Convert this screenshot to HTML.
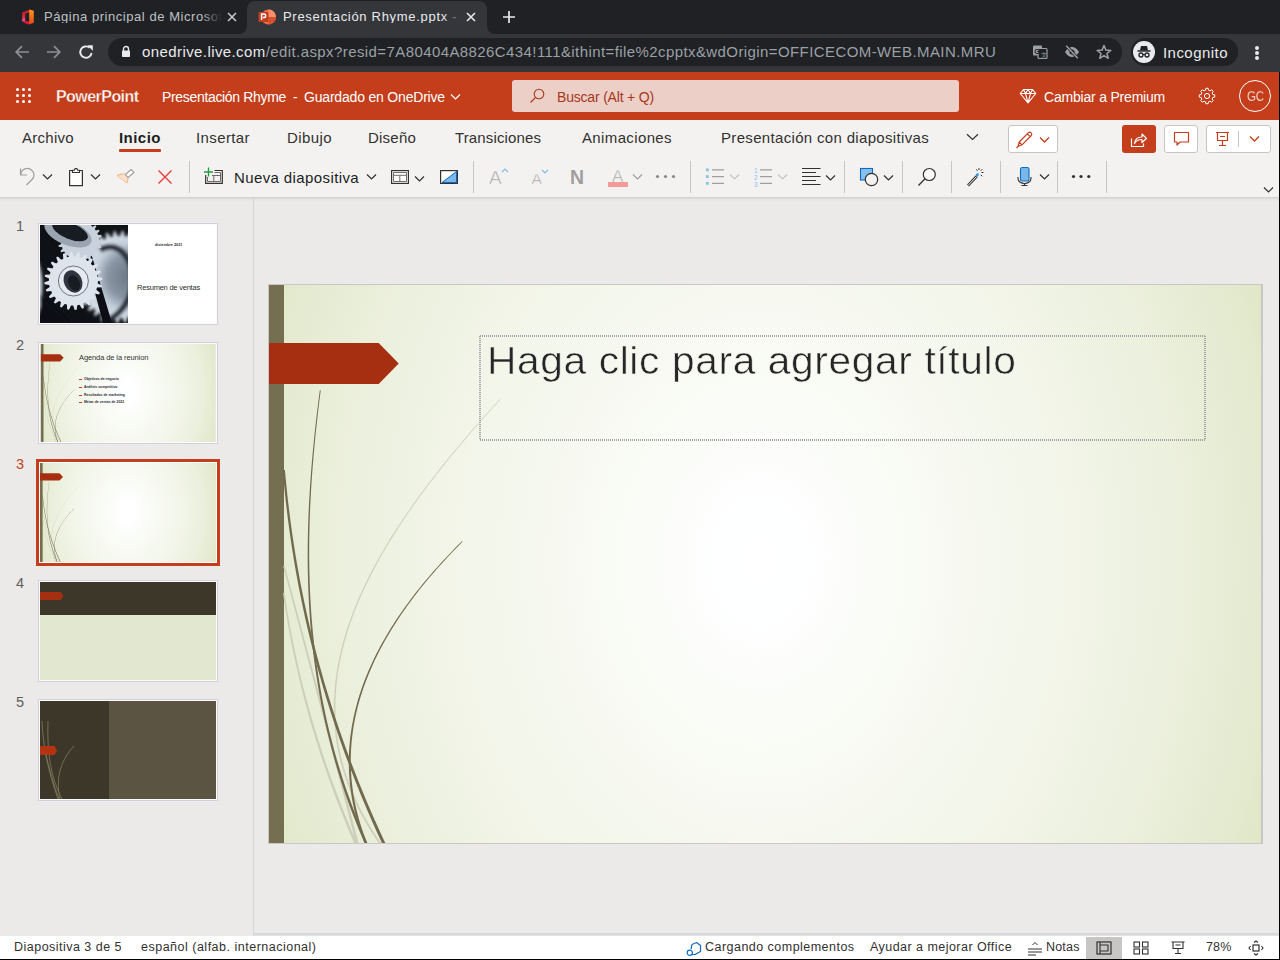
<!DOCTYPE html>
<html><head><meta charset="utf-8">
<style>
*{margin:0;padding:0;box-sizing:border-box}
html,body{width:1280px;height:960px;overflow:hidden;background:#000;font-family:"Liberation Sans",sans-serif}
.a{position:absolute}
.t{position:absolute;white-space:nowrap;line-height:1}
#tabs{left:0;top:0;width:1280px;height:34px;background:#202124}
#toolbar{left:0;top:34px;width:1280px;height:38px;background:#35363a}
#hdr{left:0;top:72px;width:1279px;height:48px;background:#c43e1c}
#rib{left:0;top:120px;width:1279px;height:77px;background:#f3f2f1}
#pane{left:0;top:197px;width:253px;height:739px;background:#ebeae8}
#canvas{left:254px;top:197px;width:1025px;height:736px;background:#ebeae8}
#status{left:0;top:936px;width:1279px;height:23px;background:#fff}
</style></head><body>
<!-- CHROME -->
<div class="a" id="tabs"></div>
<!-- inactive tab favicon (office) -->
<svg class="a" style="left:21px;top:9px" width="14" height="16" viewBox="0 0 14 16">
<defs><linearGradient id="ogR" x1="0" y1="0" x2="0" y2="1"><stop offset="0" stop-color="#ff9b16"/><stop offset="1" stop-color="#e2451a"/></linearGradient><linearGradient id="ogL" x1="0" y1="0" x2="0" y2="1"><stop offset="0" stop-color="#c41b25"/><stop offset="0.6" stop-color="#d9283f"/><stop offset="1" stop-color="#ee5fc0"/></linearGradient></defs>
<path d="M1.2 3.6 L8.6 0.4 V3.4 L4.2 4.6 V12 L1.2 12.6Z" fill="url(#ogL)"/>
<path d="M1.2 12.6 L4.2 12 L8.6 12.4 V15.6 L4.6 14.6Z" fill="#e7173b"/>
<path d="M8.2 0.4 L12.8 1.8 V13.8 L8.2 15.6Z" fill="url(#ogR)"/>
</svg>
<div class="t" id="tab1t" style="left:44px;top:10px;font-size:13px;letter-spacing:0.55px;color:#bdc1c6;width:180px;overflow:hidden">Página principal de Microsoft</div>
<div class="a" style="left:202px;top:0;width:22px;height:34px;background:linear-gradient(90deg,rgba(32,33,36,0),#202124 90%)"></div>
<svg class="a" style="left:227px;top:12px" width="10" height="10" viewBox="0 0 10 10"><path d="M1 1L9 9M9 1L1 9" stroke="#c4c7c9" stroke-width="1.6"/></svg>
<!-- active tab -->
<div class="a" style="left:247px;top:1px;width:240px;height:34px;background:#35363a;border-radius:8px 8px 0 0"></div>
<div class="a" style="left:239px;top:26px;width:8px;height:8px;background:#35363a"></div>
<div class="a" style="left:239px;top:18px;width:8px;height:16px;background:#202124;border-radius:0 0 8px 0"></div>
<div class="a" style="left:487px;top:26px;width:8px;height:8px;background:#35363a"></div>
<div class="a" style="left:487px;top:18px;width:8px;height:16px;background:#202124;border-radius:0 0 0 8px"></div>
<svg class="a" style="left:258px;top:9px" width="18" height="16" viewBox="0 0 18 16">
<circle cx="10.5" cy="8" r="7.5" fill="#ed6c47"/>
<path d="M10.5 0.5 A7.5 7.5 0 0 1 18 8 L10.5 8Z" fill="#ff8f6b"/>
<path d="M10.5 8 L18 8 A7.5 7.5 0 0 1 10.5 15.5Z" fill="#d35230"/>
<rect x="0.5" y="3" width="10" height="10" rx="1" fill="#c43e1c"/>
<path d="M3.6 11V5h2.3a1.8 1.8 0 0 1 0 3.6H4.9" stroke="#fff" stroke-width="1.5" fill="none"/>
</svg>
<div class="t" id="tab2t" style="left:283px;top:10px;font-size:13px;letter-spacing:0.7px;color:#e8eaed;width:178px;overflow:hidden">Presentación Rhyme.pptx - PowerPoint</div>
<div class="a" style="left:443px;top:2px;width:19px;height:30px;background:linear-gradient(90deg,rgba(53,54,58,0),#35363a 95%)"></div>
<svg class="a" style="left:466px;top:12px" width="10" height="10" viewBox="0 0 10 10"><path d="M1 1L9 9M9 1L1 9" stroke="#e8eaed" stroke-width="1.6"/></svg>
<svg class="a" style="left:502px;top:10px" width="14" height="14" viewBox="0 0 14 14"><path d="M7 1V13M1 7H13" stroke="#e8eaed" stroke-width="1.7"/></svg>

<div class="a" id="toolbar"></div>
<svg class="a" style="left:14px;top:44px" width="16" height="16" viewBox="0 0 16 16"><path d="M15 8H2.5M8 2.2L2.2 8L8 13.8" stroke="#8d9095" stroke-width="1.7" fill="none"/></svg>
<svg class="a" style="left:46px;top:44px" width="16" height="16" viewBox="0 0 16 16"><path d="M1 8H13.5M8 2.2L13.8 8L8 13.8" stroke="#8d9095" stroke-width="1.7" fill="none"/></svg>
<svg class="a" style="left:78px;top:44px" width="16" height="16" viewBox="0 0 16 16"><path d="M13.6 9A5.7 5.7 0 1 1 11.6 3.7" stroke="#e8eaed" stroke-width="1.9" fill="none"/><path d="M9.3 1.2H14.8V6.7Z" fill="#e8eaed"/></svg>
<div class="a" style="left:108px;top:38px;width:1014px;height:28px;background:#202124;border-radius:14px"></div>
<svg class="a" style="left:121px;top:45px" width="10" height="13" viewBox="0 0 10 13"><path d="M2.5 6V4a2.5 2.5 0 0 1 5 0V6" stroke="#e8eaed" stroke-width="1.4" fill="none"/><rect x="1" y="5.5" width="8" height="6.5" rx="0.8" fill="#e8eaed"/></svg>
<div class="t" id="url" style="left:142px;top:44px;font-size:15px;letter-spacing:0.41px;color:#9aa0a6"><span style="color:#e8eaed">onedrive.live.com</span>/edit.aspx?resid=7A80404A8826C434!111&amp;ithint=file%2cpptx&amp;wdOrigin=OFFICECOM-WEB.MAIN.MRU</div>
<svg class="a" style="left:1032px;top:44px" width="16" height="16" viewBox="0 0 16 16"><rect x="1" y="1.5" width="9" height="10" rx="1" fill="#9aa0a6"/><rect x="6" y="4.5" width="9" height="10" rx="1" fill="#202124" stroke="#9aa0a6" stroke-width="1.2"/><text x="2.2" y="9.5" font-size="7" font-weight="bold" fill="#202124" font-family="Liberation Sans">G</text><text x="8.5" y="12.5" font-size="6" fill="#9aa0a6" font-family="Liberation Sans">文</text></svg>
<svg class="a" style="left:1064px;top:44px" width="16" height="16" viewBox="0 0 16 16"><path d="M1 8C3 4.5 5.5 3 8 3S13 4.5 15 8C13 11.5 10.5 13 8 13S3 11.5 1 8Z" fill="#9aa0a6"/><circle cx="8" cy="8" r="2.5" fill="#202124"/><path d="M2 1.5L14 14.5" stroke="#202124" stroke-width="3"/><path d="M2.2 1.8L13.8 14.2" stroke="#9aa0a6" stroke-width="1.5"/></svg>
<svg class="a" style="left:1096px;top:44px" width="16" height="16" viewBox="0 0 16 16"><path d="M8 1.5L9.9 6.1L14.8 6.4L11 9.5L12.2 14.3L8 11.6L3.8 14.3L5 9.5L1.2 6.4L6.1 6.1Z" stroke="#9aa0a6" stroke-width="1.5" fill="none" stroke-linejoin="round"/></svg>
<div class="a" style="left:1131px;top:38px;width:107px;height:28px;background:#202124;border-radius:14px"></div>
<div class="a" style="left:1133px;top:41px;width:22px;height:22px;background:#e8eaed;border-radius:50%"></div>
<svg class="a" style="left:1135px;top:43px" width="18" height="18" viewBox="0 0 18 18"><path d="M5 7.2L6 3H12L13 7.2Z" fill="#202124"/><rect x="2.5" y="7.2" width="13" height="1.5" fill="#202124"/><circle cx="6" cy="12" r="2" stroke="#202124" stroke-width="1.3" fill="none"/><circle cx="12" cy="12" r="2" stroke="#202124" stroke-width="1.3" fill="none"/><path d="M8 11.5H10" stroke="#202124" stroke-width="1.2"/></svg>
<div class="t" id="incog" style="left:1163px;top:45px;font-size:15px;letter-spacing:0.45px;color:#e8eaed">Incognito</div>
<div class="a" style="left:1255px;top:46px;width:4px;height:4px;background:#e8eaed;border-radius:50%"></div>
<div class="a" style="left:1255px;top:51px;width:4px;height:4px;background:#e8eaed;border-radius:50%"></div>
<div class="a" style="left:1255px;top:56px;width:4px;height:4px;background:#e8eaed;border-radius:50%"></div>
<!-- OFFICE HEADER -->
<div class="a" id="hdr"></div>
<svg class="a" style="left:15px;top:87px" width="18" height="18" viewBox="0 0 18 18" fill="#fff"><circle cx="2.5" cy="2.5" r="1.5"/><circle cx="8.5" cy="2.5" r="1.5"/><circle cx="14.5" cy="2.5" r="1.5"/><circle cx="2.5" cy="8.5" r="1.5"/><circle cx="8.5" cy="8.5" r="1.5"/><circle cx="14.5" cy="8.5" r="1.5"/><circle cx="2.5" cy="14.5" r="1.5"/><circle cx="8.5" cy="14.5" r="1.5"/><circle cx="14.5" cy="14.5" r="1.5"/></svg>
<div class="t" style="left:56px;top:89.3px;font-size:16px;font-weight:bold;color:#fff;letter-spacing:-0.55px;-webkit-text-stroke:0.35px #c43e1c">PowerPoint</div>
<div class="t" style="left:162px;top:89.8px;font-size:14px;color:#fff;letter-spacing:-0.33px">Presentación Rhyme</div>
<div class="t" style="left:293px;top:89.8px;font-size:14px;color:#fff">-</div>
<div class="t" style="left:304px;top:89.8px;font-size:14px;color:#fff;letter-spacing:-0.19px">Guardado en OneDrive</div>
<svg class="a" style="left:450px;top:93px" width="11" height="8" viewBox="0 0 11 8"><path d="M1 1.5L5.5 6L10 1.5" stroke="#fff" stroke-width="1.2" fill="none"/></svg>
<div class="a" style="left:512px;top:80px;width:447px;height:32px;background:#eccfc7;border-radius:3px"></div>
<svg class="a" style="left:529px;top:88px" width="16" height="16" viewBox="0 0 16 16"><circle cx="10" cy="6" r="4.8" stroke="#a7381b" stroke-width="1.1" fill="none"/><path d="M6.6 9.4L1.5 14.5" stroke="#a7381b" stroke-width="1.2"/></svg>
<div class="t" style="left:557px;top:90.3px;font-size:14px;color:#a7381b;letter-spacing:-0.19px">Buscar (Alt + Q)</div>
<svg class="a" style="left:1019px;top:88px" width="18" height="16" viewBox="0 0 18 16"><path d="M4.5 1.5H13.5L16.8 5.5L9 14.8L1.2 5.5Z M1.2 5.5H16.8 M6.5 5.5L9 14.8L11.5 5.5 M4.5 1.5L6.5 5.5L9 1.5L11.5 5.5L13.5 1.5" stroke="#fff" stroke-width="1.1" fill="none" stroke-linejoin="round"/></svg>
<div class="t" style="left:1044px;top:89.5px;font-size:14px;color:#fff;letter-spacing:-0.2px">Cambiar a Premium</div>
<svg class="a" style="left:1198px;top:87px" width="18" height="18" viewBox="0 0 18 18"><path d="M7.90 1.28 L10.10 1.28 L10.49 3.19 L12.05 3.84 L13.68 2.76 L15.24 4.32 L14.16 5.95 L14.81 7.51 L16.72 7.90 L16.72 10.10 L14.81 10.49 L14.16 12.05 L15.24 13.68 L13.68 15.24 L12.05 14.16 L10.49 14.81 L10.10 16.72 L7.90 16.72 L7.51 14.81 L5.95 14.16 L4.32 15.24 L2.76 13.68 L3.84 12.05 L3.19 10.49 L1.28 10.10 L1.28 7.90 L3.19 7.51 L3.84 5.95 L2.76 4.32 L4.32 2.76 L5.95 3.84 L7.51 3.19Z" stroke="#fff" stroke-width="1" fill="none" stroke-linejoin="round"/><circle cx="9" cy="9" r="2.6" stroke="#fff" stroke-width="1" fill="none"/></svg>
<div class="a" style="left:1239px;top:80px;width:32px;height:32px;border:1px solid #fff;border-radius:50%"></div>
<div class="t" style="left:1246.5px;top:89px;font-size:14.5px;color:#fff;letter-spacing:-0.2px;transform:scaleX(0.8);transform-origin:0 0;-webkit-text-stroke:0.3px #c43e1c">GC</div>

<!-- RIBBON -->
<div class="a" id="rib"></div>
<div class="t" style="left:22px;top:130px;font-size:15px;color:#323130;letter-spacing:0.28px">Archivo</div>
<div class="t" style="left:119px;top:130px;font-size:15px;font-weight:bold;color:#201f1e;letter-spacing:0.45px">Inicio</div>
<div class="a" style="left:119px;top:149px;width:42px;height:3px;background:#c43e1c;border-radius:1px"></div>
<div class="t" style="left:196px;top:130px;font-size:15px;color:#323130;letter-spacing:0.39px">Insertar</div>
<div class="t" style="left:287px;top:130px;font-size:15px;color:#323130;letter-spacing:0.41px">Dibujo</div>
<div class="t" style="left:368px;top:130px;font-size:15px;color:#323130;letter-spacing:0.22px">Diseño</div>
<div class="t" style="left:455px;top:130px;font-size:15px;color:#323130;letter-spacing:0.13px">Transiciones</div>
<div class="t" style="left:582px;top:130px;font-size:15px;color:#323130;letter-spacing:0.37px">Animaciones</div>
<div class="t" style="left:721px;top:130px;font-size:15px;color:#323130;letter-spacing:0.33px">Presentación con diapositivas</div>
<svg class="a" style="left:966px;top:133px" width="13" height="8" viewBox="0 0 13 8"><path d="M1 1.2L6.5 6.5L12 1.2" stroke="#323130" stroke-width="1.2" fill="none"/></svg>
<!-- right buttons -->
<div class="a" style="left:1008px;top:125px;width:50px;height:28px;background:#fff;border:1px solid #c8c6c4;border-radius:3px"></div>
<svg class="a" style="left:1015px;top:130px" width="20" height="19" viewBox="0 0 20 19"><path d="M3 16.5L4.2 12L13.5 2.7a2 2 0 0 1 2.8 2.8L7 14.8Z M12.3 3.9L15.1 6.7 M4.2 12L7 14.8 M1.5 18L3 16.5" stroke="#c43e1c" stroke-width="1.2" fill="none" stroke-linejoin="round"/></svg>
<svg class="a" style="left:1039px;top:136px" width="11" height="8" viewBox="0 0 11 8"><path d="M1 1.5L5.5 6L10 1.5" stroke="#c43e1c" stroke-width="1.3" fill="none"/></svg>
<div class="a" style="left:1122px;top:125px;width:34px;height:28px;background:#c43e1c;border-radius:3px"></div>
<svg class="a" style="left:1130px;top:131px" width="18" height="17" viewBox="0 0 18 17"><path d="M1.5 7.5V15.5H13.5V12.5" stroke="#fff" stroke-width="1.2" fill="none"/><path d="M4.5 12.5C5 8 8 6 12 6V3L16.5 7.5L12 11.5V8.5C8.5 8.5 6 9.5 4.5 12.5Z" stroke="#fff" stroke-width="1.2" fill="none" stroke-linejoin="round"/></svg>
<div class="a" style="left:1164px;top:125px;width:34px;height:28px;background:#fff;border:1px solid #c8c6c4;border-radius:3px"></div>
<svg class="a" style="left:1173px;top:131px" width="17" height="16" viewBox="0 0 17 16"><path d="M1.5 1.5H15.5V11H7L4 14V11H1.5Z" stroke="#c43e1c" stroke-width="1.2" fill="none" stroke-linejoin="round"/></svg>
<div class="a" style="left:1206px;top:125px;width:65px;height:28px;background:#fff;border:1px solid #c8c6c4;border-radius:3px"></div>
<svg class="a" style="left:1215px;top:131px" width="15" height="16" viewBox="0 0 15 16"><path d="M1 1.5H14 M2.5 1.5V9.5H12.5V1.5 M7.5 9.5V14.5 M4 14.5H11 M5 5.5H10" stroke="#c43e1c" stroke-width="1.2" fill="none"/></svg>
<div class="a" style="left:1238px;top:131px;width:1px;height:16px;background:#c8c6c4"></div>
<svg class="a" style="left:1249px;top:135px" width="11" height="8" viewBox="0 0 11 8"><path d="M1 1.5L5.5 6L10 1.5" stroke="#c43e1c" stroke-width="1.3" fill="none"/></svg>

<!-- toolbar row -->
<svg class="a" style="left:18px;top:167px" width="20" height="20" viewBox="0 0 20 20"><path d="M2.5 1.5V8H9" stroke="#a19f9d" stroke-width="1.2" fill="none"/><path d="M2.8 7.8A6.5 6.5 0 0 1 14 3.5C16.8 6 16.5 10 14 12.5L8.5 18" stroke="#a19f9d" stroke-width="1.2" fill="none"/></svg>
<svg class="a" style="left:42px;top:173px" width="11" height="8" viewBox="0 0 11 8"><path d="M1 1.5L5.5 6L10 1.5" stroke="#323130" stroke-width="1.2" fill="none"/></svg>
<svg class="a" style="left:68px;top:167px" width="16" height="20" viewBox="0 0 16 20"><path d="M1.6 3.5H4.5V5.5H11.5V3.5H14.4V18.6H1.6Z" stroke="#323130" stroke-width="1.2" fill="#fff" stroke-linejoin="round"/><path d="M4.5 5.5V3.2H6.3L7 1.6H9L9.7 3.2H11.5V5.5Z" stroke="#323130" stroke-width="1.1" fill="#fff" stroke-linejoin="round"/></svg>
<svg class="a" style="left:90px;top:173px" width="11" height="8" viewBox="0 0 11 8"><path d="M1 1.5L5.5 6L10 1.5" stroke="#323130" stroke-width="1.2" fill="none"/></svg>
<svg class="a" style="left:116px;top:168px" width="20" height="18" viewBox="0 0 20 18"><path d="M1 7.5L7.5 10.5L11 15Z" fill="#fbe1cb" stroke="#eeae7c" stroke-width="1"/><path d="M1 7.5C4 6 7 5.5 9.5 6.5L12 9.5C12 12 11.5 13.5 11 15" stroke="#eeae7c" stroke-width="1" fill="#fbe1cb"/><path d="M9.5 6.5L15 1.5L18 4.5L12 9.5Z" stroke="#a19f9d" stroke-width="1.1" fill="#fff" stroke-linejoin="round"/></svg>
<svg class="a" style="left:157px;top:169px" width="16" height="16" viewBox="0 0 16 16"><path d="M1.5 1.5L14.5 14.5M14.5 1.5L1.5 14.5" stroke="#e8393b" stroke-width="1.4"/></svg>
<div class="a" style="left:189px;top:161px;width:1px;height:32px;background:#c8c6c4"></div>
<svg class="a" style="left:204px;top:166px" width="20" height="19" viewBox="0 0 20 19"><path d="M10.5 4.5H18.3V17.3H1.7V9" stroke="#323130" stroke-width="1.2" fill="none"/><path d="M10.5 6.5H16.5V15.5H3.5V11 M8 9.5H16.5 M9.8 9.5V15.5" stroke="#6b6a69" stroke-width="1" fill="none"/><path d="M4.5 1.5V10.5M0 6H9" stroke="#1e9e3e" stroke-width="1.3"/></svg>
<div class="t" style="left:234px;top:170px;font-size:15px;color:#201f1e;letter-spacing:0.39px">Nueva diapositiva</div>
<svg class="a" style="left:366px;top:173px" width="11" height="8" viewBox="0 0 11 8"><path d="M1 1.5L5.5 6L10 1.5" stroke="#323130" stroke-width="1.2" fill="none"/></svg>
<svg class="a" style="left:390px;top:169px" width="20" height="16" viewBox="0 0 20 16"><rect x="1.6" y="1.6" width="16.8" height="12.8" stroke="#323130" stroke-width="1.2" fill="#fff"/><path d="M3.5 3.5H16.5V12.5H3.5Z M3.5 6.3H16.5 M9.8 6.3V12.5" stroke="#6e6d6c" stroke-width="1" fill="none"/></svg>
<svg class="a" style="left:414px;top:175px" width="11" height="8" viewBox="0 0 11 8"><path d="M1 1.5L5.5 6L10 1.5" stroke="#323130" stroke-width="1.2" fill="none"/></svg>
<svg class="a" style="left:439px;top:169px" width="20" height="16" viewBox="0 0 20 16"><rect x="1.6" y="1.6" width="16.8" height="12.8" stroke="#323130" stroke-width="1.2" fill="#fff"/><path d="M3 13.5L17.5 2.5V13.5Z" fill="#7ab8ec" stroke="#1064c0" stroke-width="1"/></svg>
<div class="a" style="left:473px;top:161px;width:1px;height:32px;background:#c8c6c4"></div>
<div class="t" style="left:489px;top:167.5px;font-size:19px;color:#a19f9d;-webkit-text-stroke:0.6px #f3f2f1">A</div>
<svg class="a" style="left:501px;top:168px" width="8" height="5" viewBox="0 0 8 5"><path d="M1 4L4 1L7 4" stroke="#7fbae8" stroke-width="1.1" fill="none"/></svg>
<div class="t" style="left:531.5px;top:170.5px;font-size:15.5px;color:#a19f9d;-webkit-text-stroke:0.5px #f3f2f1">A</div>
<svg class="a" style="left:541px;top:169px" width="8" height="5" viewBox="0 0 8 5"><path d="M1 1L4 4L7 1" stroke="#7fbae8" stroke-width="1.1" fill="none"/></svg>
<div class="t" style="left:570px;top:168px;font-size:19.5px;font-weight:bold;color:#a19f9d">N</div>
<div class="t" style="left:612px;top:167.5px;font-size:17px;color:#a19f9d;-webkit-text-stroke:0.55px #f3f2f1">A</div>
<div class="a" style="left:608px;top:182px;width:20px;height:5px;background:#f59a9a"></div>
<svg class="a" style="left:632px;top:173px" width="11" height="8" viewBox="0 0 11 8"><path d="M1 1.5L5.5 6L10 1.5" stroke="#a19f9d" stroke-width="1.2" fill="none"/></svg>
<svg class="a" style="left:655px;top:174px" width="21" height="5" viewBox="0 0 21 5" fill="#8a8886"><circle cx="2.5" cy="2.5" r="1.6"/><circle cx="10.5" cy="2.5" r="1.6"/><circle cx="18.5" cy="2.5" r="1.6"/></svg>
<div class="a" style="left:690px;top:161px;width:1px;height:32px;background:#c8c6c4"></div>
<svg class="a" style="left:705px;top:167px" width="21" height="19" viewBox="0 0 21 19"><rect x="1" y="1.5" width="2.8" height="2.8" fill="#8cc2ea"/><rect x="1" y="8.2" width="2.8" height="2.8" fill="#8cc2ea"/><rect x="1" y="15" width="2.8" height="2.8" fill="#8cc2ea"/><path d="M7 2.9H19M7 9.6H19M7 16.4H19" stroke="#a19f9d" stroke-width="1.1"/></svg>
<svg class="a" style="left:729px;top:173px" width="11" height="8" viewBox="0 0 11 8"><path d="M1 1.5L5.5 6L10 1.5" stroke="#c8c6c4" stroke-width="1.2" fill="none"/></svg>
<svg class="a" style="left:753px;top:166px" width="21" height="21" viewBox="0 0 21 21"><text x="1" y="7" font-size="6.5" fill="#8cc2ea" font-family="Liberation Sans">1</text><text x="1" y="14" font-size="6.5" fill="#8cc2ea" font-family="Liberation Sans">2</text><text x="1" y="20.5" font-size="6.5" fill="#8cc2ea" font-family="Liberation Sans">3</text><path d="M7 3.9H19M7 10.6H19M7 17.4H19" stroke="#a19f9d" stroke-width="1.1"/></svg>
<svg class="a" style="left:777px;top:173px" width="11" height="8" viewBox="0 0 11 8"><path d="M1 1.5L5.5 6L10 1.5" stroke="#c8c6c4" stroke-width="1.2" fill="none"/></svg>
<svg class="a" style="left:801px;top:166px" width="21" height="21" viewBox="0 0 21 21"><path d="M1 2.5H19.5M1 6.5H15M1 10.5H19.5M1 14.5H15M1 18.5H19.5" stroke="#323130" stroke-width="1.1"/></svg>
<svg class="a" style="left:825px;top:174px" width="11" height="8" viewBox="0 0 11 8"><path d="M1 1.5L5.5 6L10 1.5" stroke="#323130" stroke-width="1.2" fill="none"/></svg>
<div class="a" style="left:844px;top:161px;width:1px;height:32px;background:#c8c6c4"></div>
<svg class="a" style="left:859px;top:167px" width="21" height="20" viewBox="0 0 21 20"><rect x="1.5" y="1.5" width="12" height="11.5" fill="#86c0ef" stroke="#0f6cbd" stroke-width="1.1"/><circle cx="12.5" cy="12.5" r="6.2" fill="#f3f2f1" stroke="#323130" stroke-width="1.2"/></svg>
<svg class="a" style="left:883px;top:174px" width="11" height="8" viewBox="0 0 11 8"><path d="M1 1.5L5.5 6L10 1.5" stroke="#323130" stroke-width="1.2" fill="none"/></svg>
<div class="a" style="left:902px;top:161px;width:1px;height:32px;background:#c8c6c4"></div>
<svg class="a" style="left:917px;top:167px" width="20" height="20" viewBox="0 0 20 20"><circle cx="12.3" cy="7.5" r="6" stroke="#323130" stroke-width="1.2" fill="#fafafa"/><path d="M8 11.8L1.5 18.5" stroke="#323130" stroke-width="1.3"/></svg>
<div class="a" style="left:951px;top:161px;width:1px;height:32px;background:#c8c6c4"></div>
<svg class="a" style="left:966px;top:167px" width="20" height="20" viewBox="0 0 20 20"><path d="M2 18.5L10.5 9.5" stroke="#323130" stroke-width="2.6"/><path d="M2 18.5L10.5 9.5" stroke="#f3f2f1" stroke-width="1"/><path d="M9.5 8.5C10 6.5 11.5 6 12.5 6.5C13.2 7.5 12.5 9.5 10.8 10.2Z" fill="#3b8ee0"/><path d="M13 1V3M17.5 5.5H15.5M16.3 2.2L14.8 3.7M16.3 9.3L14.8 7.8M10.5 2.3L11.3 3.8" stroke="#323130" stroke-width="1"/></svg>
<div class="a" style="left:1000px;top:161px;width:1px;height:32px;background:#c8c6c4"></div>
<svg class="a" style="left:1016px;top:166px" width="17" height="21" viewBox="0 0 17 21"><rect x="4.5" y="1.5" width="8.5" height="13.5" rx="1.8" fill="#7ab8ec" stroke="#0f6cbd" stroke-width="1.1"/><path d="M2 11V12.5A6.5 5 0 0 0 15 12.5V11 M8.5 17.5V19.5 M5.5 19.5H11.5" stroke="#323130" stroke-width="1.1" fill="none"/></svg>
<svg class="a" style="left:1039px;top:173px" width="11" height="8" viewBox="0 0 11 8"><path d="M1 1.5L5.5 6L10 1.5" stroke="#323130" stroke-width="1.2" fill="none"/></svg>
<div class="a" style="left:1057px;top:161px;width:1px;height:32px;background:#c8c6c4"></div>
<svg class="a" style="left:1071px;top:174px" width="21" height="5" viewBox="0 0 21 5" fill="#323130"><circle cx="2.5" cy="2.5" r="1.6"/><circle cx="10" cy="2.5" r="1.6"/><circle cx="17.8" cy="2.5" r="1.6"/></svg>
<div class="a" style="left:1106px;top:161px;width:1px;height:32px;background:#c8c6c4"></div>
<svg class="a" style="left:1263px;top:186px" width="11" height="8" viewBox="0 0 11 8"><path d="M1 1.5L5.5 6L10 1.5" stroke="#323130" stroke-width="1.2" fill="none"/></svg>
<!-- PANE -->
<div class="a" id="pane"></div>
<div class="a" style="left:253px;top:197px;width:1px;height:739px;background:#d3d6db"></div>
<div class="t" style="left:16px;top:219px;font-size:14.5px;color:#605e5c">1</div>
<div class="t" style="left:16px;top:338px;font-size:14.5px;color:#605e5c">2</div>
<div class="t" style="left:16px;top:457px;font-size:14.5px;color:#c43e1c">3</div>
<div class="t" style="left:16px;top:576px;font-size:14.5px;color:#605e5c">4</div>
<div class="t" style="left:16px;top:695px;font-size:14.5px;color:#605e5c">5</div>
<!-- thumb 1 -->
<div class="a" style="left:39px;top:224px;width:178px;height:100px;border:1px solid #fbfbfc;outline:1px solid #d3d1db;background:#fff;overflow:hidden">
 <svg class="a" style="left:0;top:0" width="88" height="98" viewBox="0 0 88 98">
  <defs><filter id="bl2" x="-20%" y="-20%" width="140%" height="140%"><feGaussianBlur stdDeviation="1.6"/></filter><filter id="bl1"><feGaussianBlur stdDeviation="0.5"/></filter>
  <radialGradient id="rg2" cx="0.6" cy="0.5" r="0.6"><stop offset="0" stop-color="#6a7684"/><stop offset="0.4" stop-color="#8a96a4"/><stop offset="0.62" stop-color="#c5d0dc"/><stop offset="1" stop-color="#dfe6ee"/></radialGradient></defs>
  <rect width="88" height="98" fill="#0e1116"/>
  <g filter="url(#bl2)"><path d="M121.0 52.0 L126.0 53.6 L125.9 55.6 L120.7 56.6 L120.4 59.1 L125.0 61.6 L124.5 63.5 L119.3 63.6 L118.5 66.0 L122.7 69.2 L121.9 71.1 L116.7 70.3 L115.5 72.5 L119.0 76.4 L117.9 78.1 L113.0 76.4 L111.4 78.4 L114.2 82.8 L112.8 84.2 L108.2 81.7 L106.4 83.4 L108.3 88.2 L106.7 89.4 L102.6 86.2 L100.5 87.5 L101.6 92.6 L99.8 93.5 L96.3 89.6 L94.0 90.5 L94.2 95.7 L92.3 96.3 L89.6 91.9 L87.1 92.4 L86.4 97.6 L84.4 97.8 L82.5 92.9 L80.0 93.0 L78.4 98.0 L76.4 97.9 L75.4 92.7 L72.9 92.4 L70.4 97.0 L68.5 96.5 L68.4 91.3 L66.0 90.5 L62.8 94.7 L60.9 93.9 L61.7 88.7 L59.5 87.5 L55.6 91.0 L53.9 89.9 L55.6 85.0 L53.6 83.4 L49.2 86.2 L47.8 84.8 L50.3 80.2 L48.6 78.4 L43.8 80.3 L42.6 78.7 L45.8 74.6 L44.5 72.5 L39.4 73.6 L38.5 71.8 L42.4 68.3 L41.5 66.0 L36.3 66.2 L35.7 64.3 L40.1 61.6 L39.6 59.1 L34.4 58.4 L34.2 56.4 L39.1 54.5 L39.0 52.0 L34.0 50.4 L34.1 48.4 L39.3 47.4 L39.6 44.9 L35.0 42.4 L35.5 40.5 L40.7 40.4 L41.5 38.0 L37.3 34.8 L38.1 32.9 L43.3 33.7 L44.5 31.5 L41.0 27.6 L42.1 25.9 L47.0 27.6 L48.6 25.6 L45.8 21.2 L47.2 19.8 L51.8 22.3 L53.6 20.6 L51.7 15.8 L53.3 14.6 L57.4 17.8 L59.5 16.5 L58.4 11.4 L60.2 10.5 L63.7 14.4 L66.0 13.5 L65.8 8.3 L67.7 7.7 L70.4 12.1 L72.9 11.6 L73.6 6.4 L75.6 6.2 L77.5 11.1 L80.0 11.0 L81.6 6.0 L83.6 6.1 L84.6 11.3 L87.1 11.6 L89.6 7.0 L91.5 7.5 L91.6 12.7 L94.0 13.5 L97.2 9.3 L99.1 10.1 L98.3 15.3 L100.5 16.5 L104.4 13.0 L106.1 14.1 L104.4 19.0 L106.4 20.6 L110.8 17.8 L112.2 19.2 L109.7 23.8 L111.4 25.6 L116.2 23.7 L117.4 25.3 L114.2 29.4 L115.5 31.5 L120.6 30.4 L121.5 32.2 L117.6 35.7 L118.5 38.0 L123.7 37.8 L124.3 39.7 L119.9 42.4 L120.4 44.9 L125.6 45.6 L125.8 47.6 L120.9 49.5Z" fill="url(#rg2)"/><path d="M60 25 C75 15 95 30 92 60 C90 80 75 95 60 98" stroke="#2a323c" stroke-width="6" fill="none"/></g>
  <g filter="url(#bl1)"><path d="M45 30 L51 28 L72 98 L63 98 Z" fill="#0e1116"/></g>
  <g filter="url(#bl2)"><path d="M-5 30 C5 45 5 75 -5 95 L-5 30Z" fill="#c7d0da"/><path d="M0 70 L30 98 L0 98Z" fill="#0b0e12"/></g>
  <g filter="url(#bl1)"><path d="M58.6 19.8 L61.3 21.5 L60.9 22.9 L57.7 22.9 L57.0 24.5 L59.2 26.8 L58.4 28.0 L55.3 27.2 L54.2 28.6 L55.7 31.4 L54.7 32.4 L51.9 30.8 L50.5 31.8 L51.2 34.9 L49.9 35.6 L47.7 33.4 L46.0 34.0 L45.9 37.2 L44.5 37.5 L42.9 34.8 L41.2 35.0 L40.2 38.0 L38.8 38.0 L37.9 34.9 L36.2 34.6 L34.5 37.3 L33.1 36.9 L33.1 33.7 L31.5 33.0 L29.2 35.2 L28.0 34.4 L28.8 31.3 L27.4 30.2 L24.6 31.7 L23.6 30.7 L25.2 27.9 L24.2 26.5 L21.1 27.2 L20.4 25.9 L22.6 23.7 L22.0 22.0 L18.8 21.9 L18.5 20.5 L21.2 18.9 L21.0 17.2 L18.0 16.2 L18.0 14.8 L21.1 13.9 L21.4 12.2 L18.7 10.5 L19.1 9.1 L22.3 9.1 L23.0 7.5 L20.8 5.2 L21.6 4.0 L24.7 4.8 L25.8 3.4 L24.3 0.6 L25.3 -0.4 L28.1 1.2 L29.5 0.2 L28.8 -2.9 L30.1 -3.6 L32.3 -1.4 L34.0 -2.0 L34.1 -5.2 L35.5 -5.5 L37.1 -2.8 L38.8 -3.0 L39.8 -6.0 L41.2 -6.0 L42.1 -2.9 L43.8 -2.6 L45.5 -5.3 L46.9 -4.9 L46.9 -1.7 L48.5 -1.0 L50.8 -3.2 L52.0 -2.4 L51.2 0.7 L52.6 1.8 L55.4 0.3 L56.4 1.3 L54.8 4.1 L55.8 5.5 L58.9 4.8 L59.6 6.1 L57.4 8.3 L58.0 10.0 L61.2 10.1 L61.5 11.5 L58.8 13.1 L59.0 14.8 L62.0 15.8 L62.0 17.2 L58.9 18.1Z" fill="#c9d2dc"/><ellipse cx="28" cy="8" rx="25" ry="12" transform="rotate(22 28 8)" fill="#9aa5b1"/><ellipse cx="30" cy="6" rx="19" ry="8" transform="rotate(22 30 6)" fill="#151a20"/></g>
  <g filter="url(#bl1)"><path d="M57.8 58.4 L62.1 60.4 L61.7 62.3 L57.0 62.5 L56.3 64.7 L59.9 67.7 L59.1 69.4 L54.5 68.4 L53.3 70.3 L56.0 74.1 L54.8 75.6 L50.6 73.5 L48.9 75.0 L50.6 79.4 L49.0 80.5 L45.5 77.3 L43.5 78.3 L43.9 83.0 L42.1 83.7 L39.5 79.7 L37.3 80.2 L36.6 84.8 L34.7 85.0 L33.2 80.5 L31.0 80.4 L29.0 84.7 L27.1 84.3 L26.9 79.6 L24.7 78.9 L21.7 82.5 L20.0 81.7 L21.0 77.1 L19.1 75.9 L15.3 78.6 L13.8 77.4 L15.9 73.2 L14.4 71.5 L10.0 73.2 L8.9 71.6 L12.1 68.1 L11.1 66.1 L6.4 66.5 L5.7 64.7 L9.7 62.1 L9.2 59.9 L4.6 59.2 L4.4 57.3 L8.9 55.8 L9.0 53.6 L4.7 51.6 L5.1 49.7 L9.8 49.5 L10.5 47.3 L6.9 44.3 L7.7 42.6 L12.3 43.6 L13.5 41.7 L10.8 37.9 L12.0 36.4 L16.2 38.5 L17.9 37.0 L16.2 32.6 L17.8 31.5 L21.3 34.7 L23.3 33.7 L22.9 29.0 L24.7 28.3 L27.3 32.3 L29.5 31.8 L30.2 27.2 L32.1 27.0 L33.6 31.5 L35.8 31.6 L37.8 27.3 L39.7 27.7 L39.9 32.4 L42.1 33.1 L45.1 29.5 L46.8 30.3 L45.8 34.9 L47.7 36.1 L51.5 33.4 L53.0 34.6 L50.9 38.8 L52.4 40.5 L56.8 38.8 L57.9 40.4 L54.7 43.9 L55.7 45.9 L60.4 45.5 L61.1 47.3 L57.1 49.9 L57.6 52.1 L62.2 52.8 L62.4 54.7 L57.9 56.2Z" fill="#dde4ec"/>
  <circle cx="33.4" cy="56" r="15" fill="#e6ebf1" stroke="#4b5562" stroke-width="0.8"/>
  <ellipse cx="33" cy="56.5" rx="9" ry="11.5" transform="rotate(-25 33 56.5)" fill="#2e353f"/>
  <ellipse cx="34" cy="58" rx="5.5" ry="8" transform="rotate(-25 34 58)" fill="#151a20"/></g>
 </svg>
 <div class="t" style="left:115px;top:18.9px;font-size:3.7px;font-weight:bold;color:#2a2a2a;letter-spacing:0.05px">diciembre 2021</div>
 <div class="t" style="left:97px;top:59px;font-size:7.5px;color:#2e2e2e;letter-spacing:-0.22px">Resumen de ventas</div>
</div>
<!-- thumb 2 -->
<div class="a" style="left:39px;top:343px;width:178px;height:100px;border:1px solid #fbfbfc;outline:1px solid #d3d1db;overflow:hidden">
 <svg class="a" style="left:0;top:0" width="176" height="98" viewBox="0 0 992 558"><use href="#slidebg"/></svg>
 <div class="t" style="left:39px;top:10px;font-size:7.5px;color:#333;letter-spacing:-0.1px">Agenda de la reunion</div>
 <div class="a" style="left:39px;top:34.5px;width:2.5px;height:1.2px;background:#c0401c"></div><div class="t" style="left:44px;top:34.1px;font-size:3.45px;font-weight:bold;color:#2a2a3a">Objetivos de negocio</div>
 <div class="a" style="left:39px;top:42.5px;width:2.5px;height:1.2px;background:#c0401c"></div><div class="t" style="left:44px;top:42.1px;font-size:3.45px;font-weight:bold;color:#2a2a3a">Análisis competitivo</div>
 <div class="a" style="left:39px;top:50.5px;width:2.5px;height:1.2px;background:#c0401c"></div><div class="t" style="left:44px;top:50.1px;font-size:3.45px;font-weight:bold;color:#2a2a3a">Resultados de marketing</div>
 <div class="a" style="left:39px;top:57.5px;width:2.5px;height:1.2px;background:#c0401c"></div><div class="t" style="left:44px;top:57.1px;font-size:3.45px;font-weight:bold;color:#2a2a3a">Metas de ventas de 2022</div>
</div>
<!-- thumb 3 -->
<div class="a" style="left:36px;top:459px;width:184px;height:107px;border:3px solid #c43e1c;background:#fff;overflow:hidden">
 <svg class="a" style="left:1px;top:1px" width="176" height="99" viewBox="0 0 992 558"><use href="#slidebg"/></svg>
</div>
<!-- thumb 4 -->
<div class="a" style="left:39px;top:581px;width:178px;height:100px;border:1px solid #fbfbfc;outline:1px solid #d3d1db;background:#e2e8cf;overflow:hidden">
 <div class="a" style="left:0;top:0;width:176px;height:33px;background:#3d3729"></div>
 <svg class="a" style="left:0;top:10px" width="24" height="8" viewBox="0 0 24 8"><path d="M0 0H20.5L23.5 4L20.5 8H0Z" fill="#a62f12"/></svg>
</div>
<!-- thumb 5 -->
<div class="a" style="left:39px;top:700px;width:178px;height:100px;border:1px solid #fbfbfc;outline:1px solid #d3d1db;background:#5b5442;overflow:hidden">
 <div class="a" style="left:0;top:0;width:69px;height:98px;background:#3c3729"></div>
 <svg class="a" style="left:0;top:0" width="69" height="98" viewBox="0 0 69 98"><path d="M2 20C3 45 8 70 18 98M8 20C7 50 10 75 22 98M34 45C22 58 15 75 20 98M5 50C10 70 14 85 19 98" stroke="#8d8465" stroke-width="0.7" fill="none"/><path d="M0 45H14.5L17 49.5L14.5 54H0Z" fill="#b33413"/></svg>
</div>

<!-- CANVAS -->
<div class="a" id="canvas"></div>
<div class="a" style="left:254px;top:933px;width:1025px;height:2px;background:#d5d8dd"></div>
<div class="a" style="left:254px;top:935px;width:1025px;height:1px;background:#e4e3e1"></div>
<div class="a" style="left:268px;top:284px;width:995px;height:560px;background:#c9c8c6"></div>
<svg class="a" style="left:269px;top:285px" width="992" height="558" viewBox="0 0 992 558">
 <defs>
  <radialGradient id="bgg" gradientUnits="userSpaceOnUse" cx="492" cy="276" r="575" gradientTransform="translate(492 276) scale(1 1.3) translate(-492 -276)">
   <stop offset="0" stop-color="#ffffff"/>
   <stop offset="0.07" stop-color="#feffff"/>
   <stop offset="0.3" stop-color="#f8faf3"/>
   <stop offset="0.5" stop-color="#f3f6ea"/>
   <stop offset="0.72" stop-color="#ecf0de"/>
   <stop offset="0.86" stop-color="#e5ebd1"/>
   <stop offset="1" stop-color="#dde5c1"/>
  </radialGradient>
  <g id="slidebg">
   <rect width="992" height="558" fill="url(#bgg)"/>
   <rect x="0" y="0" width="15" height="558" fill="#756f51"/>
   <path d="M230.75 114.16 L223.86 121.71 L217.06 129.26 L210.35 136.80 L203.73 144.35 L197.21 151.90 L190.80 159.45 L184.49 167.00 L178.30 174.54 L172.22 182.09 L166.27 189.64 L160.43 197.19 L154.73 204.74 L149.17 212.29 L143.74 219.84 L138.45 227.40 L133.31 234.95 L128.32 242.50 L123.48 250.05 L118.80 257.61 L114.29 265.16 L109.94 272.72 L105.77 280.27 L101.77 287.83 L97.96 295.39 L94.32 302.95 L90.88 310.51 L87.63 318.07 L84.58 325.63 L81.73 333.20 L79.08 340.76 L76.65 348.33 L74.43 355.89 L72.43 363.46 L70.65 371.03 L69.10 378.60 L67.78 386.18 L66.70 393.75 L65.86 401.33 L65.26 408.90 L64.92 416.48 L64.83 424.06 L64.99 431.64 L65.42 439.22 L66.11 446.80 L67.08 454.39 L68.32 461.97 L69.84 469.56 L71.65 477.14 L73.74 484.73 L76.13 492.31 L78.81 499.90 L81.79 507.49 L85.08 515.07 L88.67 522.66 L92.59 530.24 L96.81 537.83 L101.36 545.41 L106.24 553.00 L111.44 560.57 L113.08 559.43 L107.88 551.90 L103.02 544.38 L98.49 536.86 L94.27 529.34 L90.37 521.82 L86.78 514.30 L83.49 506.78 L80.51 499.26 L77.83 491.74 L75.45 484.22 L73.35 476.70 L71.54 469.18 L70.01 461.66 L68.75 454.14 L67.77 446.62 L67.06 439.10 L66.62 431.57 L66.43 424.05 L66.50 416.52 L66.82 409.00 L67.39 401.47 L68.20 393.94 L69.26 386.41 L70.54 378.87 L72.06 371.34 L73.81 363.81 L75.78 356.27 L77.97 348.73 L80.37 341.19 L82.98 333.65 L85.80 326.11 L88.83 318.57 L92.04 311.02 L95.46 303.48 L99.06 295.93 L102.85 288.38 L106.81 280.84 L110.96 273.29 L115.28 265.74 L119.76 258.19 L124.41 250.64 L129.22 243.09 L134.18 235.53 L139.30 227.98 L144.56 220.43 L149.96 212.87 L155.51 205.32 L161.18 197.76 L166.99 190.21 L172.92 182.65 L178.98 175.10 L185.15 167.54 L191.43 159.98 L197.83 152.43 L204.32 144.87 L210.92 137.31 L217.61 129.75 L224.40 122.19 L231.27 114.64Z" fill="#cfd1bb"/>
   <path d="M14.16 281.21 L15.42 285.94 L16.68 290.67 L17.93 295.40 L19.19 300.13 L20.45 304.86 L21.70 309.59 L22.96 314.32 L24.21 319.05 L25.47 323.79 L26.72 328.52 L27.98 333.25 L29.23 337.98 L30.48 342.71 L31.73 347.44 L32.98 352.17 L34.23 356.90 L35.48 361.63 L36.73 366.36 L37.98 371.09 L39.23 375.83 L40.48 380.56 L41.73 385.29 L42.97 390.02 L44.22 394.75 L45.46 399.48 L46.71 404.21 L47.95 408.94 L49.20 413.67 L50.44 418.40 L51.68 423.13 L52.92 427.86 L54.17 432.60 L55.41 437.33 L56.65 442.06 L57.89 446.79 L59.13 451.52 L60.37 456.25 L61.60 460.98 L62.84 465.71 L64.08 470.44 L65.32 475.17 L66.55 479.90 L67.79 484.64 L69.02 489.37 L70.26 494.10 L71.49 498.83 L72.72 503.56 L73.96 508.29 L75.19 513.02 L76.42 517.75 L77.65 522.48 L78.88 527.21 L80.11 531.94 L81.34 536.67 L82.57 541.41 L83.80 546.14 L85.02 550.87 L86.25 555.60 L87.48 560.33 L89.99 559.67 L88.75 554.94 L87.51 550.22 L86.26 545.49 L85.02 540.76 L83.77 536.04 L82.53 531.31 L81.28 526.58 L80.03 521.86 L78.79 517.13 L77.54 512.40 L76.29 507.68 L75.04 502.95 L73.79 498.22 L72.54 493.50 L71.29 488.77 L70.04 484.04 L68.79 479.32 L67.53 474.59 L66.28 469.86 L65.03 465.14 L63.77 460.41 L62.52 455.68 L61.26 450.96 L60.01 446.23 L58.75 441.50 L57.50 436.78 L56.24 432.05 L54.98 427.32 L53.72 422.59 L52.46 417.87 L51.20 413.14 L49.94 408.41 L48.68 403.69 L47.42 398.96 L46.16 394.23 L44.90 389.51 L43.63 384.78 L42.37 380.05 L41.10 375.33 L39.84 370.60 L38.57 365.87 L37.31 361.15 L36.04 356.42 L34.78 351.69 L33.51 346.97 L32.24 342.24 L30.97 337.51 L29.70 332.79 L28.43 328.06 L27.16 323.33 L25.89 318.61 L24.62 313.88 L23.35 309.15 L22.08 304.43 L20.80 299.70 L19.53 294.97 L18.25 290.25 L16.98 285.52 L15.70 280.79Z" fill="#cdcfb8"/>
   <path d="M14.04 308.11 L14.64 312.39 L15.26 316.66 L15.90 320.94 L16.57 325.22 L17.26 329.49 L17.97 333.77 L18.70 338.05 L19.45 342.32 L20.22 346.60 L21.02 350.88 L21.83 355.15 L22.67 359.43 L23.53 363.71 L24.41 367.99 L25.31 372.26 L26.23 376.54 L27.18 380.82 L28.15 385.10 L29.13 389.37 L30.14 393.65 L31.17 397.93 L32.22 402.21 L33.30 406.48 L34.39 410.76 L35.51 415.04 L36.64 419.32 L37.80 423.60 L38.98 427.87 L40.19 432.15 L41.41 436.43 L42.65 440.71 L43.92 444.99 L45.21 449.26 L46.52 453.54 L47.85 457.82 L49.20 462.10 L50.57 466.38 L51.97 470.66 L53.38 474.94 L54.82 479.21 L56.28 483.49 L57.76 487.77 L59.26 492.05 L60.78 496.33 L62.33 500.61 L63.90 504.89 L65.48 509.17 L67.09 513.45 L68.72 517.73 L70.37 522.00 L72.05 526.28 L73.74 530.56 L75.46 534.84 L77.20 539.12 L78.96 543.40 L80.74 547.68 L82.54 551.96 L84.36 556.24 L86.20 560.52 L88.59 559.48 L86.73 555.22 L84.90 550.96 L83.09 546.69 L81.29 542.43 L79.52 538.17 L77.77 533.90 L76.05 529.64 L74.34 525.38 L72.65 521.11 L70.99 516.85 L69.35 512.59 L67.73 508.32 L66.13 504.06 L64.55 499.80 L62.99 495.53 L61.46 491.27 L59.94 487.01 L58.45 482.74 L56.98 478.48 L55.53 474.22 L54.10 469.95 L52.69 465.69 L51.30 461.43 L49.94 457.16 L48.59 452.90 L47.27 448.63 L45.97 444.37 L44.69 440.11 L43.43 435.84 L42.20 431.58 L40.98 427.31 L39.79 423.05 L38.61 418.78 L37.46 414.52 L36.33 410.26 L35.22 405.99 L34.14 401.73 L33.07 397.46 L32.03 393.20 L31.00 388.93 L30.00 384.67 L29.02 380.40 L28.06 376.14 L27.12 371.87 L26.21 367.61 L25.31 363.34 L24.44 359.08 L23.59 354.81 L22.76 350.55 L21.95 346.28 L21.16 342.02 L20.39 337.75 L19.64 333.48 L18.92 329.22 L18.22 324.95 L17.54 320.69 L16.88 316.42 L16.24 312.15 L15.62 307.89Z" fill="#cdcfb8"/>
   <path d="M50.82 105.24 L49.81 112.95 L48.84 120.66 L47.90 128.36 L47.00 136.07 L46.14 143.78 L45.32 151.49 L44.53 159.19 L43.79 166.90 L43.09 174.61 L42.44 182.32 L41.84 190.03 L41.28 197.74 L40.77 205.45 L40.31 213.16 L39.91 220.87 L39.56 228.58 L39.26 236.29 L39.03 244.00 L38.85 251.72 L38.73 259.43 L38.67 267.14 L38.68 274.85 L38.75 282.57 L38.88 290.28 L39.09 298.00 L39.36 305.71 L39.70 313.43 L40.11 321.14 L40.60 328.86 L41.16 336.57 L41.80 344.29 L42.52 352.01 L43.31 359.73 L44.19 367.44 L45.15 375.16 L46.19 382.88 L47.32 390.60 L48.53 398.32 L49.83 406.04 L51.22 413.76 L52.70 421.48 L54.28 429.20 L55.95 436.93 L57.71 444.65 L59.58 452.37 L61.54 460.09 L63.60 467.82 L65.76 475.54 L68.02 483.27 L70.39 490.99 L72.87 498.72 L75.45 506.44 L78.14 514.17 L80.94 521.89 L83.86 529.62 L86.88 537.35 L90.03 545.07 L93.28 552.80 L96.66 560.52 L99.04 559.48 L95.64 551.78 L92.37 544.10 L89.22 536.41 L86.17 528.73 L83.24 521.04 L80.43 513.35 L77.72 505.66 L75.12 497.98 L72.62 490.29 L70.24 482.60 L67.95 474.91 L65.77 467.22 L63.69 459.53 L61.71 451.84 L59.82 444.15 L58.04 436.46 L56.34 428.77 L54.75 421.07 L53.24 413.38 L51.82 405.69 L50.50 398.00 L49.26 390.30 L48.11 382.61 L47.04 374.91 L46.05 367.22 L45.15 359.52 L44.33 351.83 L43.59 344.13 L42.92 336.43 L42.33 328.74 L41.82 321.04 L41.37 313.34 L41.00 305.64 L40.70 297.94 L40.47 290.24 L40.31 282.54 L40.21 274.84 L40.18 267.14 L40.21 259.44 L40.30 251.74 L40.45 244.04 L40.65 236.34 L40.92 228.64 L41.24 220.93 L41.62 213.23 L42.04 205.53 L42.52 197.82 L43.05 190.12 L43.63 182.41 L44.25 174.71 L44.92 167.01 L45.63 159.30 L46.38 151.60 L47.18 143.89 L48.01 136.18 L48.88 128.48 L49.79 120.77 L50.74 113.07 L51.71 105.36Z" fill="#716a4e"/>
   <path d="M13.74 185.10 L14.29 191.46 L14.87 197.82 L15.50 204.18 L16.15 210.54 L16.85 216.91 L17.58 223.27 L18.35 229.63 L19.16 236.00 L20.00 242.36 L20.88 248.72 L21.80 255.09 L22.76 261.45 L23.75 267.82 L24.79 274.18 L25.86 280.54 L26.97 286.91 L28.12 293.27 L29.31 299.64 L30.54 306.00 L31.80 312.36 L33.11 318.73 L34.46 325.09 L35.84 331.46 L37.27 337.82 L38.74 344.19 L40.25 350.55 L41.80 356.92 L43.39 363.28 L45.02 369.65 L46.70 376.01 L48.41 382.38 L50.17 388.75 L51.97 395.11 L53.81 401.48 L55.69 407.84 L57.62 414.21 L59.59 420.57 L61.60 426.94 L63.66 433.31 L65.76 439.67 L67.90 446.04 L70.09 452.40 L72.32 458.77 L74.59 465.14 L76.91 471.50 L79.28 477.87 L81.69 484.24 L84.14 490.60 L86.64 496.97 L89.19 503.34 L91.78 509.70 L94.41 516.07 L97.10 522.44 L99.82 528.80 L102.60 535.17 L105.42 541.54 L108.29 547.90 L111.21 554.27 L114.17 560.63 L116.89 559.37 L113.92 553.02 L111.00 546.67 L108.12 540.33 L105.30 533.98 L102.52 527.64 L99.78 521.29 L97.09 514.95 L94.45 508.60 L91.85 502.26 L89.30 495.91 L86.80 489.57 L84.34 483.22 L81.92 476.88 L79.55 470.53 L77.22 464.19 L74.94 457.84 L72.70 451.49 L70.51 445.15 L68.36 438.80 L66.25 432.46 L64.19 426.11 L62.17 419.76 L60.19 413.42 L58.25 407.07 L56.36 400.73 L54.51 394.38 L52.70 388.03 L50.94 381.69 L49.21 375.34 L47.53 368.99 L45.89 362.65 L44.29 356.30 L42.73 349.95 L41.21 343.61 L39.73 337.26 L38.30 330.91 L36.90 324.57 L35.54 318.22 L34.22 311.87 L32.95 305.53 L31.71 299.18 L30.51 292.83 L29.35 286.48 L28.23 280.13 L27.14 273.79 L26.10 267.44 L25.09 261.09 L24.12 254.74 L23.19 248.39 L22.30 242.05 L21.45 235.70 L20.63 229.35 L19.85 223.00 L19.10 216.65 L18.40 210.30 L17.73 203.95 L17.09 197.61 L16.49 191.26 L15.93 184.90Z" fill="#716a4e"/>
   <path d="M192.91 256.22 L187.78 261.35 L182.77 266.49 L177.88 271.63 L173.10 276.77 L168.44 281.91 L163.89 287.05 L159.46 292.19 L155.15 297.33 L150.95 302.47 L146.87 307.61 L142.91 312.75 L139.06 317.90 L135.33 323.04 L131.72 328.18 L128.23 333.33 L124.86 338.47 L121.61 343.62 L118.47 348.76 L115.46 353.91 L112.56 359.06 L109.79 364.21 L107.14 369.36 L104.60 374.51 L102.19 379.66 L99.90 384.81 L97.73 389.96 L95.69 395.12 L93.76 400.27 L91.96 405.43 L90.28 410.58 L88.73 415.74 L87.30 420.90 L85.99 426.06 L84.80 431.22 L83.75 436.38 L82.81 441.54 L82.00 446.70 L81.32 451.87 L80.76 457.03 L80.33 462.20 L80.02 467.36 L79.84 472.53 L79.79 477.70 L79.87 482.87 L80.07 488.04 L80.40 493.21 L80.86 498.38 L81.45 503.55 L82.17 508.72 L83.01 513.89 L83.99 519.07 L85.09 524.24 L86.33 529.41 L87.69 534.58 L89.19 539.76 L90.82 544.93 L92.57 550.10 L94.46 555.28 L96.48 560.44 L98.71 559.56 L96.68 554.43 L94.78 549.32 L93.02 544.20 L91.38 539.09 L89.88 533.98 L88.50 528.86 L87.25 523.74 L86.13 518.63 L85.14 513.51 L84.27 508.40 L83.54 503.28 L82.93 498.16 L82.44 493.05 L82.09 487.93 L81.86 482.81 L81.76 477.69 L81.78 472.57 L81.93 467.45 L82.21 462.33 L82.61 457.20 L83.14 452.08 L83.79 446.96 L84.56 441.83 L85.46 436.71 L86.49 431.58 L87.64 426.45 L88.91 421.32 L90.31 416.19 L91.82 411.06 L93.47 405.93 L95.23 400.80 L97.12 395.66 L99.13 390.53 L101.26 385.39 L103.51 380.26 L105.89 375.12 L108.39 369.98 L111.00 364.84 L113.74 359.70 L116.60 354.56 L119.58 349.42 L122.68 344.28 L125.90 339.14 L129.24 333.99 L132.70 328.85 L136.27 323.71 L139.97 318.56 L143.78 313.42 L147.71 308.27 L151.76 303.12 L155.93 297.98 L160.22 292.83 L164.62 287.68 L169.14 282.53 L173.77 277.38 L178.52 272.23 L183.39 267.08 L188.37 261.93 L193.47 256.78Z" fill="#716a4e"/>
   <path d="M0 58H109.7L129.7 78.5L109.7 99H0Z" fill="#a62f12"/>
  </g>
 </defs>
 <use href="#slidebg"/>
</svg>
<div class="a" style="left:480px;top:335px;width:726px;height:2px;background:repeating-linear-gradient(90deg,#a3a3a3 0 1px,transparent 1px 2px)"></div>
<div class="a" style="left:480px;top:439px;width:726px;height:2px;background:repeating-linear-gradient(90deg,#a3a3a3 0 1px,transparent 1px 2px)"></div>
<div class="a" style="left:479px;top:336px;width:2px;height:104px;background:repeating-linear-gradient(180deg,#a3a3a3 0 1px,transparent 1px 2px)"></div>
<div class="a" style="left:1204px;top:336px;width:2px;height:104px;background:repeating-linear-gradient(180deg,#a3a3a3 0 1px,transparent 1px 2px)"></div>
<div class="t" style="left:487px;top:342px;font-size:38px;color:#262626;letter-spacing:0.6px;transform:scaleX(1.07);transform-origin:0 0;-webkit-text-stroke:0.55px #f6f8ef">Haga clic para agregar título</div>

<!-- STATUS -->
<div class="a" id="status"></div>
<div class="t" style="left:14px;top:941px;font-size:12.5px;color:#323130;letter-spacing:0.48px">Diapositiva 3 de 5</div>
<div class="t" style="left:141px;top:941px;font-size:12.5px;color:#323130;letter-spacing:0.5px">español (alfab. internacional)</div>
<svg class="a" style="left:686px;top:941px" width="16" height="16" viewBox="0 0 16 16"><path d="M6 3.5L10.5 1.5L14.5 4.5V10.5L9 13.5H5.5" stroke="#0f6cbd" stroke-width="1.2" fill="none" stroke-linejoin="round"/><path d="M6 3.5L5 8" stroke="#0f6cbd" stroke-width="1.2"/><circle cx="3.8" cy="11.8" r="2.6" stroke="#0f6cbd" stroke-width="1.2" fill="none"/></svg>
<div class="t" style="left:705px;top:941px;font-size:12.5px;color:#323130;letter-spacing:0.47px">Cargando complementos</div>
<div class="t" style="left:870px;top:941px;font-size:12.5px;color:#323130;letter-spacing:0.46px">Ayudar a mejorar Office</div>
<svg class="a" style="left:1027px;top:940px" width="16" height="16" viewBox="0 0 16 16"><path d="M1 9H15M1 12H15M1 15H9M5.5 5L8 2.5L10.5 5" stroke="#323130" stroke-width="1" fill="none"/></svg>
<div class="t" style="left:1046px;top:941px;font-size:12.5px;color:#323130;letter-spacing:0.19px">Notas</div>
<div class="a" style="left:1086px;top:937px;width:36px;height:22px;background:#c8c6c4"></div>
<svg class="a" style="left:1096px;top:941px" width="16" height="14" viewBox="0 0 16 14"><rect x="1" y="1" width="14" height="12" stroke="#323130" stroke-width="1.2" fill="none"/><path d="M4 1V13M4 4H12V10H4" stroke="#323130" stroke-width="1.1" fill="none"/></svg>
<svg class="a" style="left:1133px;top:941px" width="16" height="14" viewBox="0 0 16 14"><rect x="1" y="1" width="5.5" height="5" stroke="#323130" stroke-width="1.1" fill="none"/><rect x="9.5" y="1" width="5.5" height="5" stroke="#323130" stroke-width="1.1" fill="none"/><rect x="1" y="8" width="5.5" height="5" stroke="#323130" stroke-width="1.1" fill="none"/><rect x="9.5" y="8" width="5.5" height="5" stroke="#323130" stroke-width="1.1" fill="none"/></svg>
<svg class="a" style="left:1171px;top:941px" width="14" height="14" viewBox="0 0 14 14"><path d="M0.5 1H13.5M2 1V7.5H12V1M7 7.5V12.5M4 12.5H10M4.5 4H9.5" stroke="#323130" stroke-width="1.1" fill="none"/></svg>
<div class="t" style="left:1206px;top:941px;font-size:12.5px;color:#323130;letter-spacing:0.13px">78%</div>
<svg class="a" style="left:1248px;top:940px" width="16" height="16" viewBox="0 0 16 16"><rect x="5" y="5" width="6" height="6" stroke="#323130" stroke-width="1.2" fill="none"/><path d="M6 2.5L8 1L10 2.5M6 13.5L8 15L10 13.5M2.5 6L1 8L2.5 10M13.5 6L15 8L13.5 10" stroke="#323130" stroke-width="1.1" fill="none"/></svg>
<div class="a" style="left:0;top:197px;width:1279px;height:5px;background:linear-gradient(rgba(200,198,196,0.75),rgba(214,213,211,0.25) 50%,rgba(214,213,211,0))"></div>
</body></html>
